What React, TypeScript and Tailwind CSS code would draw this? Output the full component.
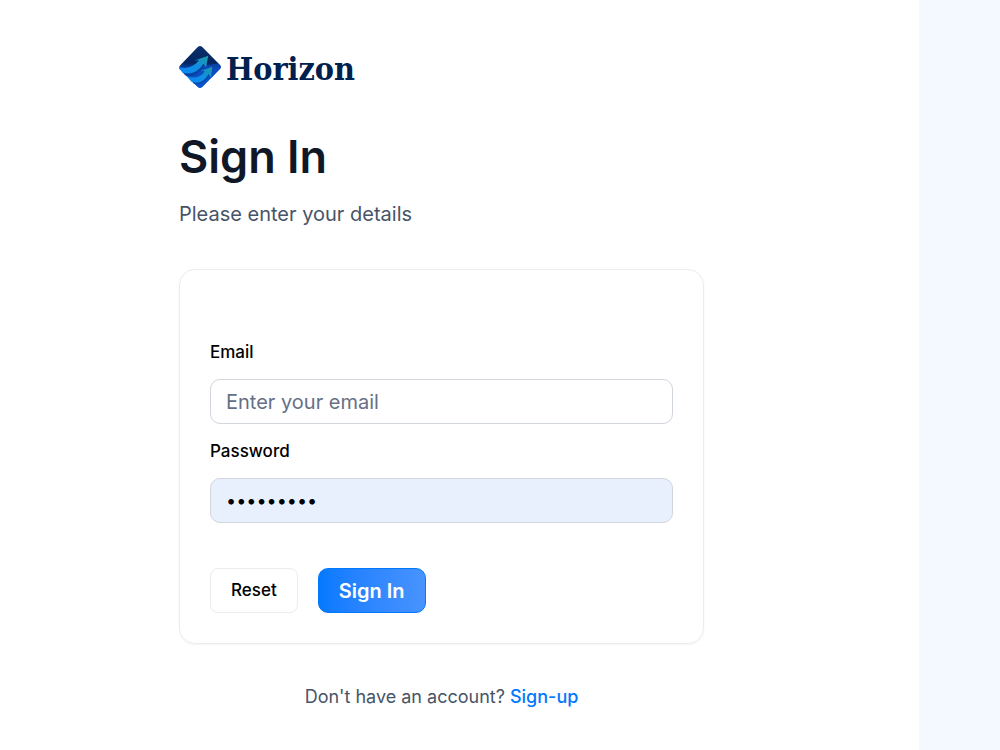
import type { InputHTMLAttributes } from "react";

function LogoMark() {
  return (
    <svg viewBox="0 0 168 168" className="size-[42px] shrink-0" aria-hidden="true">
      <defs>
        <linearGradient id="tile" x1="0" y1="0" x2="0" y2="1">
          <stop offset="0" stopColor="#0b2f6b" />
          <stop offset="0.4" stopColor="#04255f" />
          <stop offset="0.55" stopColor="#0a48b0" />
          <stop offset="1" stopColor="#0a5be0" />
        </linearGradient>
        <linearGradient id="arrow" x1="0" y1="1" x2="1" y2="0">
          <stop offset="0" stopColor="#0b86f8" />
          <stop offset="0.5" stopColor="#0f8fe2" />
          <stop offset="1" stopColor="#1f9aa6" />
        </linearGradient>
      </defs>
      <path d="M75 4 Q84 -4 93 4 L164 76 Q172 84 164 92 L93 164 Q84 172 75 164 L42 132 L2 92 Q-2 84 6 76 Z" fill="url(#tile)" />
      <path d="M60 82 Q112 78 158 70 L164 76 Q169 84 164 92 L93 164 Q84 170 75 164 L40 130 Z" fill="#0b50c8" opacity="0.55" />
      <path d="M8 98 Q50 116 88 76 L98 84 Q66 132 26 118 Z" fill="#0742a5" />
      <path d="M0 84 C32 94 60 82 80 57 L62 58 L117 39 L108 85 L97 71 C78 102 48 118 14 106 Z" fill="url(#arrow)" />
      <path d="M48 136 Q86 150 110 110 L122 116 Q96 160 58 150 Z" fill="#0742a5" />
      <path d="M32 122 C68 133 91 122 103 100 L88 100 L133 83 L128 126 L118 112 C103 142 78 154 50 143 Z" fill="url(#arrow)" />
    </svg>
  );
}

type FieldProps = InputHTMLAttributes<HTMLInputElement> & { id: string; label: string };

function Field({ id, label, className = "bg-white text-[20px]", ...props }: FieldProps) {
  return (
    <div className="flex flex-col gap-[15px]">
      <label htmlFor={id} className="text-[17px] leading-6 font-medium text-black">
        {label}
      </label>
      <input
        id={id}
        className={`h-[45px] w-full rounded-[10px] border border-gray-300 px-[15px] text-black outline-none placeholder:text-[#667085] ${className}`}
        {...props}
      />
    </div>
  );
}

export default function App() {
  return (
    <div className="flex min-h-screen bg-white font-['Inter',sans-serif]">
      <main className="flex flex-1 justify-center pt-[46px] pr-9">
        <div className="flex w-full max-w-[525px] flex-col">
          <a href="#" className="flex h-[42px] items-center gap-[5px]">
            <LogoMark />
            <span className="pt-1 font-['DejaVu_Serif_Condensed','DejaVu_Serif',serif] text-[32px] leading-10 font-bold text-[#00214f]">
              Horizon
            </span>
          </a>

          <h1 className="mt-[41px] text-[45px] leading-[55px] font-semibold text-gray-900">Sign In</h1>
          <p className="mt-[15px] text-[20px] leading-[30px] text-[#475467]">Please enter your details</p>

          <form className="mt-10 rounded-2xl border border-[#eaecf0] px-[30px] pt-[70px] pb-[30px] shadow-xs">
            <div className="flex flex-col gap-[15px]">
              <Field id="email" label="Email" type="email" placeholder="Enter your email" />
              <Field
                id="password"
                label="Password"
                type="password"
                defaultValue="horizon12"
                className="bg-[#e8f0fe] text-[18px]"
              />
            </div>
            <div className="mt-[45px] flex gap-5">
              <button
                type="reset"
                className="h-[45px] rounded-lg border border-[#eaecf0] bg-white px-5 text-[17px] font-medium text-black"
              >
                Reset
              </button>
              <button
                type="submit"
                className="h-[45px] rounded-[10px] border border-[#0179fe] bg-linear-to-r from-[#0179fe] to-[#4893ff] px-5 text-[20px] font-semibold text-white"
              >
                Sign In
              </button>
            </div>
          </form>

          <p className="mt-10 text-center text-[18px] leading-[26px] text-[#475467]">
            Don't have an account?{" "}
            <a href="#" className="font-medium text-[#0179fe]">
              Sign-up
            </a>
          </p>
        </div>
      </main>
      <aside className="w-[81px] shrink-0 bg-[#f4f8ff]" />
    </div>
  );
}
